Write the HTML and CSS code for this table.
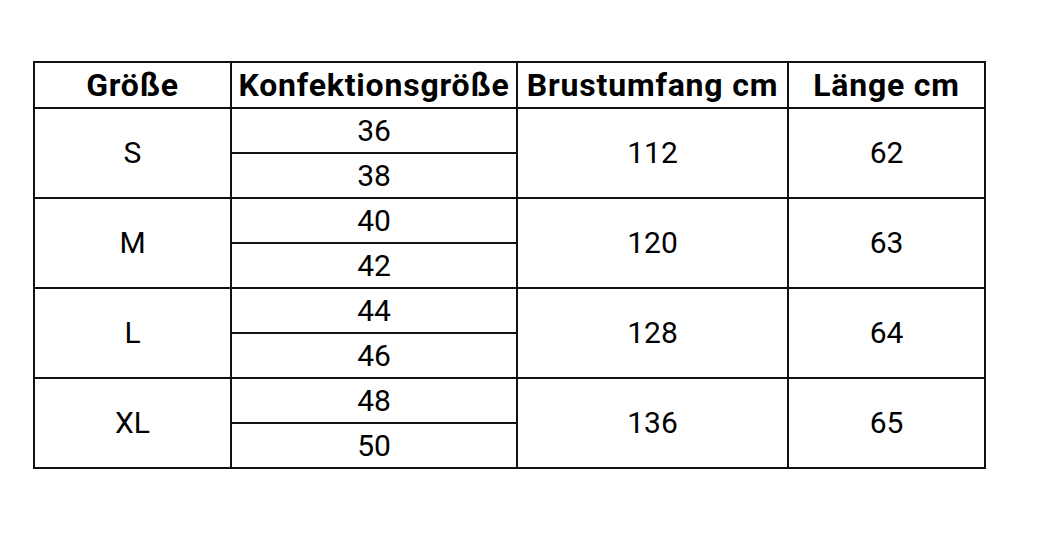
FILE: index.html
```html
<!DOCTYPE html>
<html lang="de">
<head>
<meta charset="utf-8">
<title>Größentabelle</title>
<link rel="stylesheet" href="styles.css">
</head>
<body>
<table class="size-table">
  <colgroup>
    <col class="c1"><col class="c2"><col class="c3"><col class="c4">
  </colgroup>
  <thead>
    <tr><th>Größe</th><th>Konfektionsgröße</th><th>Brustumfang cm</th><th>Länge cm</th></tr>
  </thead>
  <tbody>
    <tr><td rowspan="2">S</td><td>36</td><td rowspan="2">112</td><td rowspan="2">62</td></tr>
    <tr><td>38</td></tr>
    <tr><td rowspan="2">M</td><td>40</td><td rowspan="2">120</td><td rowspan="2">63</td></tr>
    <tr><td>42</td></tr>
    <tr><td rowspan="2">L</td><td>44</td><td rowspan="2">128</td><td rowspan="2">64</td></tr>
    <tr><td>46</td></tr>
    <tr><td rowspan="2">XL</td><td>48</td><td rowspan="2">136</td><td rowspan="2">65</td></tr>
    <tr><td>50</td></tr>
  </tbody>
</table>
</body>
</html>
```
FILE: styles.css
```css
html, body {
  margin: 0;
  padding: 0;
  background: #fff;
}
body {
  padding: 61px 0 0 33px;
  font-family: Roboto, "Liberation Sans", sans-serif;
  color: #000;
}
.size-table {
  border-collapse: collapse;
  table-layout: fixed;
  width: 953px;
}
.c1 { width: 197px; }
.c2 { width: 286px; }
.c3 { width: 271px; }
.c4 { width: 197px; }
.size-table th,
.size-table td {
  border: 2px solid #111;
  text-align: center;
  padding: 0;
}
.size-table th {
  height: 44px;
  font-family: Roboto, "Liberation Sans", sans-serif;
  font-weight: 700;
  font-size: 32px;
  letter-spacing: 0.8px;
  line-height: 1;
}
.size-table td {
  height: 43px;
  font-size: 30px;
  font-weight: 400;
  line-height: 1;
}
```
